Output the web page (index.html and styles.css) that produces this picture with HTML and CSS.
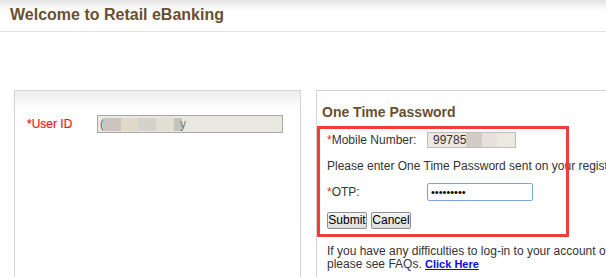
FILE: index.html
```html
<!DOCTYPE html>
<html lang="en">
<head>
<meta charset="utf-8">
<title>Welcome to Retail eBanking</title>
<link rel="stylesheet" href="styles.css">
</head>
<body>
<header class="topbar">
  <h1 class="title">Welcome to Retail eBanking</h1>
</header>
<main class="content">
  <section class="panel panel-login">
    <div class="login-row">
      <label class="req-label">*User ID</label>
      <div class="fake-input userid"><span class="paren">(</span><span class="blur u1"></span><span class="blur u2"></span><span class="blur u3"></span><span class="blur u4"></span><span class="blur u5"></span><span class="tail">y</span></div>
    </div>
  </section>
  <section class="panel panel-otp">
    <h2 class="otp-title">One Time Password</h2>
    <div class="otp-form">
      <div class="form-row row-mobile">
        <span class="lbl"><span class="star">*</span>Mobile Number:</span>
        <div class="fake-input mobile">99785<span class="blur m1"></span><span class="blur m2"></span></div>
      </div>
      <p class="note">Please enter One Time Password sent on your registered mobile number.</p>
      <div class="form-row row-otp">
        <label class="lbl" for="otp"><span class="star">*</span>OTP:</label>
        <input id="otp" class="otp-input" type="password" value="123456789">
      </div>
      <div class="actions">
        <button class="btn" type="button">Submit</button>
        <button class="btn" type="button">Cancel</button>
      </div>
    </div>
    <p class="help">If you have any difficulties to log-in to your account or forgot your password,<br>please see FAQs. <a class="link" href="#">Click Here</a></p>
    <div class="highlight"></div>
  </section>
</main>
</body>
</html>
```
FILE: styles.css
```css
html, body {
  margin: 0;
  padding: 0;
  background: #fff;
  overflow: hidden;
}
body {
  width: 606px;
  height: 277px;
  font-family: "Liberation Sans", Arial, sans-serif;
  font-size: 12px;
  color: #333;
}
.topbar {
  height: 25px;
  padding: 6px 10px 0;
  border-bottom: 1px solid #e3e3e3;
  background: linear-gradient(#e3e3e3 0, #f7f7f7 7px, #fff 13px);
}
.title {
  margin: 0;
  font-size: 16px;
  line-height: 18px;
  font-weight: bold;
  color: #6b4f2f;
  white-space: nowrap;
}
.content {
  display: flex;
  gap: 15px;
  padding: 58px 0 0 14px;
}
.panel {
  border: 1px solid #d4d4d4;
  border-bottom: none;
  height: 220px;
  flex-shrink: 0;
}
.panel-login {
  width: 285px;
  background: linear-gradient(#ededed 0, #fafafa 14px, #fff 22px);
}
.login-row {
  display: flex;
  align-items: center;
  padding: 24px 0 0 12px;
}
.req-label {
  width: 70px;
  color: #f41616;
  line-height: 14px;
  -webkit-text-stroke: 0.2px #f41616;
}
.fake-input {
  box-sizing: border-box;
  display: flex;
  align-items: center;
  background: #eae9e1;
  border: 1px solid #a8a8a8;
  overflow: hidden;
  white-space: nowrap;
  color: #333;
}
.userid {
  width: 186px;
  height: 18px;
  padding-left: 2px;
}
.paren {
  color: #666;
  width: 3px;
  overflow: hidden;
}
.blur {
  display: inline-block;
  height: 13px;
}
.u1 { width: 18px; background: #cbc4bf; }
.u2 { width: 17px; background: #e1d9c8; }
.u3 { width: 18px; background: #d3d3cb; }
.u4 { width: 18px; background: #e3dfd0; }
.u5 { width: 8px; background: #c4c4bc; }
.tail { color: #777; margin-left: -2px; }
.panel-otp {
  position: relative;
  width: 420px;
  border-right: none;
  background: #fff;
}
.otp-title {
  margin: 13px 0 0 5px;
  font-size: 14px;
  line-height: 16px;
  font-weight: bold;
  color: #6b4f2f;
  white-space: nowrap;
}
.otp-form {
  padding-left: 10px;
}
.form-row {
  display: flex;
  align-items: center;
}
.row-mobile {
  margin-top: 12px;
}
.lbl {
  width: 100px;
  line-height: 14px;
  color: #333;
  white-space: nowrap;
}
.star {
  color: #e52a2a;
}
.mobile {
  width: 89px;
  height: 16px;
  padding-left: 5px;
  border-color: #bdbdbd;
  background: #ebe9e1;
}
.m1 { width: 16px; height: 14px; background: #d1cdc5; margin-left: 0; }
.m2 { width: 15px; height: 14px; background: #e4e2db; }
.note {
  margin: 11px 0 0;
  line-height: 14px;
  white-space: nowrap;
}
.row-otp {
  margin-top: 10px;
}
.otp-input {
  box-sizing: border-box;
  width: 106px;
  height: 18px;
  margin: 0;
  padding: 0 3px;
  border: 1px solid #7ba6d7;
  border-radius: 2px;
  background: #fff;
  font-family: "Liberation Sans", Arial, sans-serif;
  font-size: 11px;
  color: #000;
  outline: none;
}
.actions {
  display: flex;
  gap: 4px;
  margin-top: 11px;
}
.btn {
  box-sizing: border-box;
  width: 40px;
  height: 17px;
  margin: 0;
  padding: 0;
  border: 1px solid #8f8f8f;
  border-radius: 2px;
  background: linear-gradient(#f5f5f5, #dddddd);
  font-family: "Liberation Sans", Arial, sans-serif;
  font-size: 12px;
  line-height: 15px;
  color: #000;
}
.help {
  margin: 16px 0 0;
  padding-left: 10px;
  line-height: 13px;
  white-space: nowrap;
}
.link {
  color: #0a0ae6;
  font-size: 11px;
  font-weight: bold;
  text-decoration: underline;
}
.highlight {
  position: absolute;
  left: 0;
  top: 35px;
  width: 252px;
  height: 111px;
  box-sizing: border-box;
  border: 3px solid #f03c3c;
  pointer-events: none;
}
```
